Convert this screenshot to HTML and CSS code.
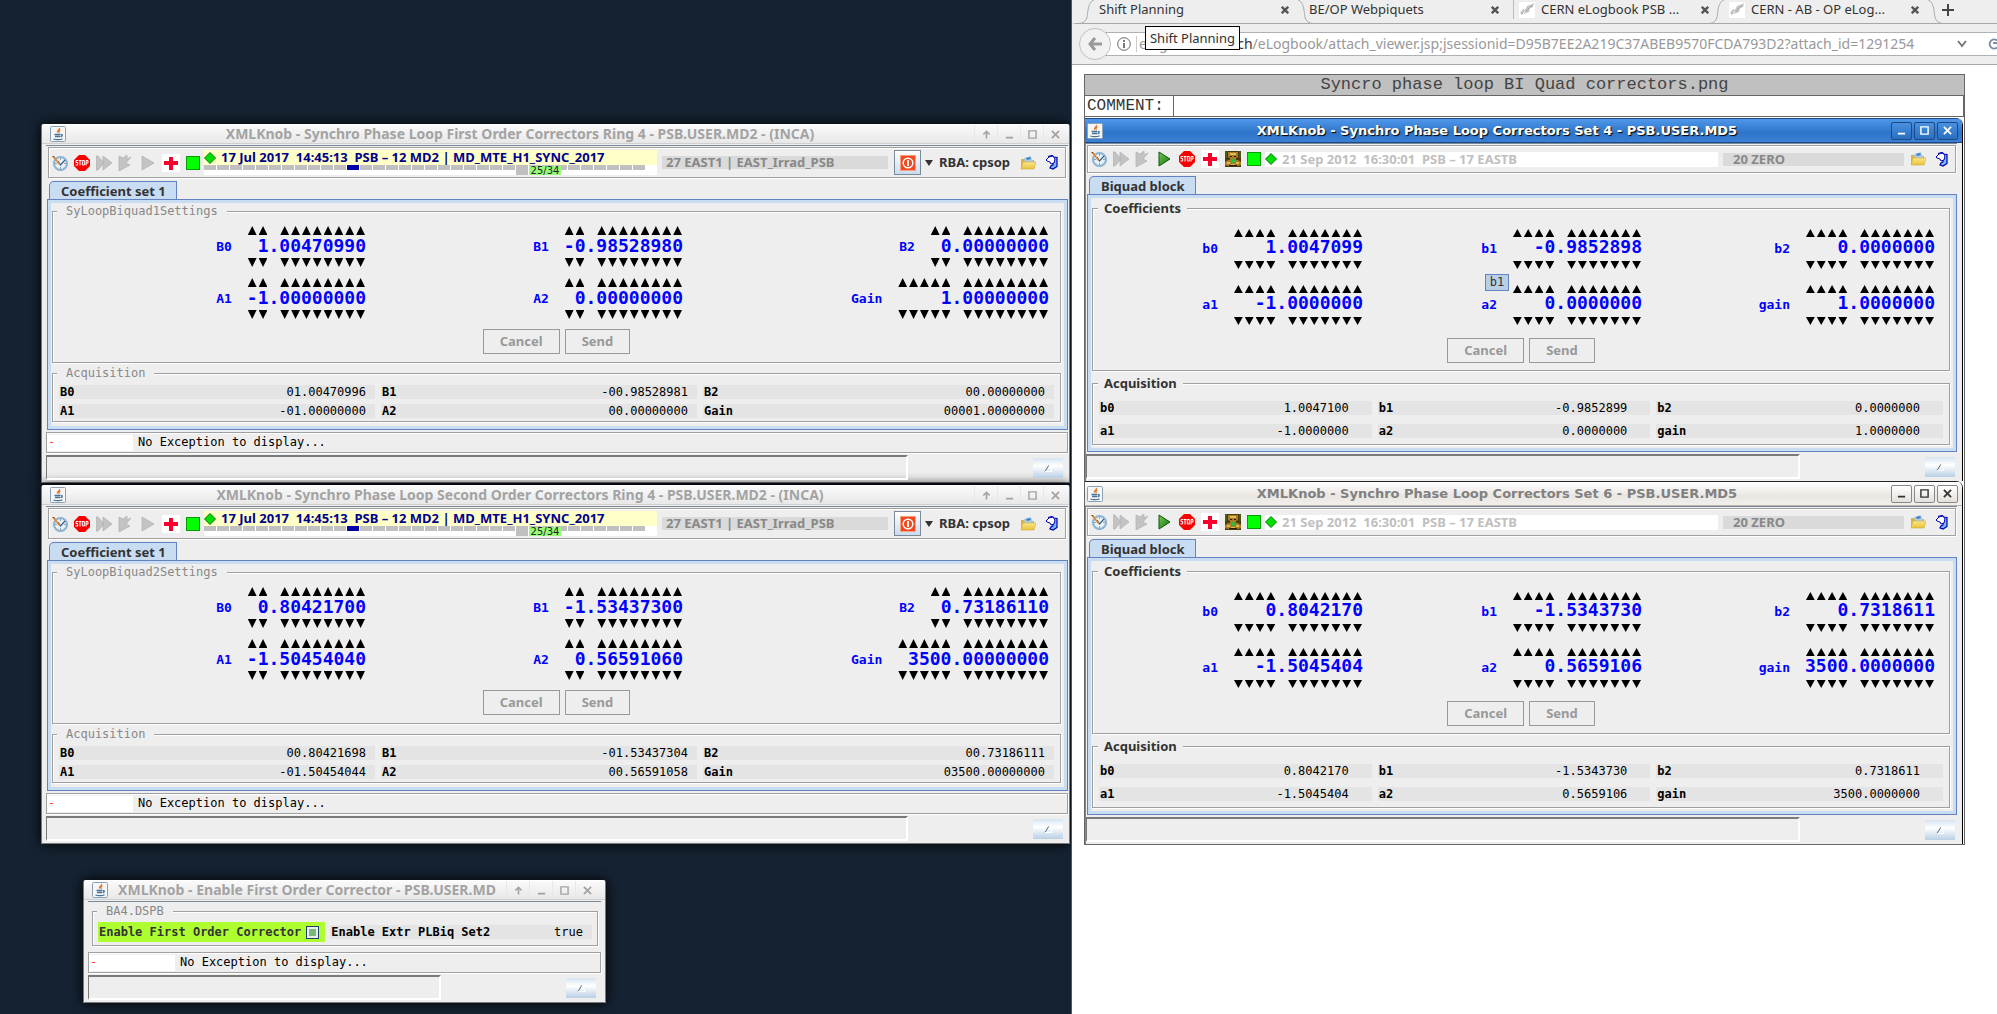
FILE: index.html
```html
<!DOCTYPE html>
<html lang="en">
<head>
<meta charset="utf-8">
<title>PSB operator console</title>
<link rel="stylesheet" href="styles.css">
</head>
<body>
<svg class="defs" aria-hidden="true">
  <defs>
    <linearGradient id="fold" x1="0" y1="0" x2="0" y2="1"><stop offset="0" stop-color="#fbe58a"/><stop offset="1" stop-color="#e8c33c"/></linearGradient>
    <linearGradient id="ply" x1="0" y1="0" x2="1" y2="1"><stop offset="0" stop-color="#7cc25a"/><stop offset="1" stop-color="#0a7a0a"/></linearGradient>
  </defs>
  <symbol id="java" viewBox="0 0 16 16"><rect x=".5" y=".5" width="15" height="15" rx="1" fill="#f4f6f8" stroke="#8aa0b4"/><path d="M9.500 2c1 1.500-3 2.500-2 4.500M10.500 4c-2 1-2 2-1 3" stroke="#e8761e" stroke-width="1.300" fill="none"/><path d="M4.500 8.500h6M5 10.500h5M11 8.500c2 0 1.500 2-.5 2.200M3.500 13c2 1 7 1 9-.3" stroke="#4a7295" stroke-width="1.300" fill="none"/></symbol>
  <symbol id="clock" viewBox="0 0 16 16"><circle cx="8.500" cy="8.500" r="6.500" fill="#e6f2fa" stroke="#8fb4d0" stroke-width="2.200"/><path d="M8.500 3.500v1M8.500 12.500v1M3.500 8.500h1M12.500 8.500h1" stroke="#555"/><path d="M6 6l2.500 4L13 5" stroke="#3f5f80" stroke-width="1.200" fill="none"/><path d="M0 1l3 1 5 7-1 1z" fill="#e8862a"/><path d="M0 1l2 0 1 2z" fill="#6b3a10"/></symbol>
  <symbol id="stop" viewBox="0 0 16 16"><path d="M5 0h6l5 5v6l-5 5H5l-5-5V5z" fill="#f80000"/><path d="M4 5.500H2v2H3.700v2.500H1.500M4.500 5.500h3M6 5.500V10.500M8.300 5.500h2v4.500h-2zM12 10.500V5.500h2v2.500h-2" stroke="#fff" fill="none"/></symbol>
  <symbol id="ff" viewBox="0 0 16 16"><path d="M0 1h2l6 7-6 7H0zM7 1l9 7-9 7z" fill="#c3c3c3" stroke="#b4b4b4" stroke-width=".8"/></symbol>
  <symbol id="skip" viewBox="0 0 16 16"><path d="M1 1l4 2 4-3 0 4 4-2-5 6 4 2L1 16z" fill="#c3c3c3" stroke="#b4b4b4" stroke-width=".8"/></symbol>
  <symbol id="playoff" viewBox="0 0 16 16"><path d="M2 1l12 7-12 7z" fill="#c3c3c3" stroke="#b4b4b4" stroke-width=".8"/></symbol>
  <symbol id="play" viewBox="0 0 16 16"><path d="M2 1l11 7-11 7z" fill="url(#ply)" stroke="#0b5a0b"/></symbol>
  <symbol id="cross" viewBox="0 0 18 18"><path fill="#fff" d="M0 0h18v18H0z"/><path d="M7 3h4v4h5v4h-5v5H7v-5H2V7h5z" fill="#f8002c"/></symbol>
  <symbol id="idol" viewBox="0 0 16 16"><path fill="#4a3a10" d="M0 0h16v16H0z"/><path d="M3 1h10v5l-2 1v2h2l3 2v3l-3 1H3l-3-1v-3l3-2h2V7L3 6z" fill="#a87c24"/><path d="M5 2h6v2H5zM2 11h3v2H2zM11 11h3v2h-3zM6 13h4v1H6z" fill="#e0bc58"/><path d="M5 5h2v1H5zM9 5h2v1H9zM4 14h8v1H4z" fill="#2a1c04"/><circle cx="8" cy="10" r="2" fill="#18c840"/><path d="M0 0h2v7H0zM14 0h2v7h-2z" fill="#4c5a14"/></symbol>
  <symbol id="ok" viewBox="0 0 14 14"><rect x=".5" y=".5" width="13" height="13" fill="#0f0" stroke="#0a9a0a"/></symbol>
  <symbol id="dia" viewBox="0 0 12 12"><path d="M6 .5L11.500 6 6 11.500.5 6z" fill="#00e000" stroke="#067806"/></symbol>
  <symbol id="folder" viewBox="0 0 16 14"><path d="M1 3h5l1 1h7v8H1z" fill="#dcb43a"/><path d="M4 2l7-2 2 6-8 1z" fill="#a9cdee"/><path d="M6 2l4-1 1 2-4 1z" fill="#3f7fc0"/><path d="M3 6h13l-2 7H1z" fill="url(#fold)" stroke="#d4ac34" stroke-width=".6"/></symbol>
  <symbol id="book" viewBox="0 0 13 15"><path d="M9 2h3v10l-3 2H6v-3l3-2z" fill="#7ab8f4"/><path d="M3 1.500l4-1 2 1.500 3 .5v9l-4 2.500-3-1 1-2 2-1V8" fill="none" stroke="#0000b0" stroke-width="1.200"/><path d="M1 5l3-3 4-1 2 3-1 4-3 1-1-2-3-1z" fill="#fff" stroke="#0000b0"/></symbol>
  <symbol id="power" viewBox="0 0 16 16"><rect width="16" height="16" rx="1" fill="#f04a1e"/><rect x=".5" y=".5" width="15" height="15" fill="none" stroke="#f8a080"/><circle cx="8" cy="8" r="4.800" fill="none" stroke="#fff" stroke-width="1.500"/><path d="M8 5v6" stroke="#fff" stroke-width="1.800"/></symbol>
  <symbol id="up" viewBox="0 0 10 10"><path d="M5 9.500V2M1.500 5L5 1.500 8.500 5" stroke="currentColor" stroke-width="1.800" fill="none"/></symbol>
  <symbol id="min" viewBox="0 0 10 10"><path d="M1 8.500h8" stroke="currentColor" stroke-width="2"/></symbol>
  <symbol id="max" viewBox="0 0 10 10"><path d="M1 1h8v8H1z" stroke="currentColor" stroke-width="1.600" fill="none"/></symbol>
  <symbol id="x" viewBox="0 0 10 10"><path d="M1 1l8 8M9 1L1 9" stroke="currentColor" stroke-width="2" fill="none"/></symbol>
  <symbol id="tx" viewBox="0 0 10 10"><path d="M1 1l8 8M9 1L1 9" stroke="currentColor" stroke-width="3" fill="none"/></symbol>
  <symbol id="tri" viewBox="0 0 9 8"><path d="M1 7.500L5 1" stroke="#666" fill="none"/><path d="M5 1l3 6.500H1" stroke="#fff" fill="none"/></symbol>
  <symbol id="fav" viewBox="0 0 16 16"><path fill="#fff" d="M0 0h16v16H0z"/><path d="M1 11l3-4 2 1 2-4 3-1 4-2-1 4-3 1-1 4-3 1-1-2-3 3z" fill="#c4c4c4"/><path d="M2 12l4-1 5-6 3-1" stroke="#a0a0a0" stroke-dasharray="2 1" fill="none"/></symbol>
</svg>

<main class="screen">
<section class="desk">

  <article class="win inca">
    <header class="title"><svg class="ji"><use href="#java"/></svg><h2>XMLKnob - Synchro Phase Loop First Order Correctors Ring 4 - PSB.USER.MD2 - (INCA)</h2>
      <button aria-label="Shade"><svg><use href="#up"/></svg></button><button aria-label="Minimise"><svg><use href="#min"/></svg></button><button aria-label="Maximise"><svg><use href="#max"/></svg></button><button aria-label="Close"><svg><use href="#x"/></svg></button></header>
    <div class="body">
      <div class="tools">
        <svg class="i16"><use href="#clock"/></svg><svg class="i16"><use href="#stop"/></svg><svg class="i16"><use href="#ff"/></svg><svg class="i16"><use href="#skip"/></svg><svg class="i16"><use href="#playoff"/></svg><svg class="i18"><use href="#cross"/></svg><svg class="i14"><use href="#ok"/></svg>
        <div class="cycle"><p class="now"><svg class="i12"><use href="#dia"/></svg>17 Jul 2017  14:45:13  PSB – 12 MD2 | MD_MTE_H1_SYNC_2017</p><div class="beats"><i class="cur"></i><i class="end"></i><span>25/34</span></div></div>
        <p class="spare">27 EAST1 | EAST_Irrad_PSB</p>
        <button class="power" aria-label="RBA login"><svg class="i16"><use href="#power"/></svg></button><span class="caret"></span><span class="rba">RBA: cpsop</span>
        <svg class="i16"><use href="#folder"/></svg><svg class="bk"><use href="#book"/></svg>
      </div>
      <button class="tab">Coefficient set 1</button>
      <div class="panel">
        <fieldset><legend>SyLoopBiquad1Settings</legend>
          <div class="knobs">
            <div class="knob"><label for="p-b0">B0</label><div class="spin" data-steps="2.8"><input id="p-b0" value="1.00470990"></div></div>
            <div class="knob"><label for="p-b1">B1</label><div class="spin" data-steps="2.8"><input id="p-b1" value="-0.98528980"></div></div>
            <div class="knob"><label for="p-b2">B2</label><div class="spin" data-steps="2.8"><input id="p-b2" value="0.00000000"></div></div>
            <div class="knob"><label for="p-a1">A1</label><div class="spin" data-steps="2.8"><input id="p-a1" value="-1.00000000"></div></div>
            <div class="knob"><label for="p-a2">A2</label><div class="spin" data-steps="2.8"><input id="p-a2" value="0.00000000"></div></div>
            <div class="knob"><label for="p-g">Gain</label><div class="spin" data-steps="5.8"><input id="p-g" value="1.00000000"></div></div>
          </div>
          <div class="acts"><button disabled>Cancel</button><button disabled>Send</button></div>
        </fieldset>
        <fieldset><legend>Acquisition</legend>
          <dl class="acq">
            <div><dt>B0</dt><dd>01.00470996</dd></div><div><dt>B1</dt><dd>-00.98528981</dd></div><div><dt>B2</dt><dd>00.00000000</dd></div>
            <div><dt>A1</dt><dd>-01.00000000</dd></div><div><dt>A2</dt><dd>00.00000000</dd></div><div><dt>Gain</dt><dd>00001.00000000</dd></div>
          </dl>
        </fieldset>
      </div>
      <div class="exc"><span class="mark">-</span><span>No Exception to display...</span></div>
      <footer class="status"><div></div><button aria-label="Show log"><svg><use href="#tri"/></svg></button></footer>
    </div>
  </article>

  <article class="win inca">
    <header class="title"><svg class="ji"><use href="#java"/></svg><h2>XMLKnob - Synchro Phase Loop Second Order Correctors Ring 4 - PSB.USER.MD2 - (INCA)</h2>
      <button aria-label="Shade"><svg><use href="#up"/></svg></button><button aria-label="Minimise"><svg><use href="#min"/></svg></button><button aria-label="Maximise"><svg><use href="#max"/></svg></button><button aria-label="Close"><svg><use href="#x"/></svg></button></header>
    <div class="body">
      <div class="tools">
        <svg class="i16"><use href="#clock"/></svg><svg class="i16"><use href="#stop"/></svg><svg class="i16"><use href="#ff"/></svg><svg class="i16"><use href="#skip"/></svg><svg class="i16"><use href="#playoff"/></svg><svg class="i18"><use href="#cross"/></svg><svg class="i14"><use href="#ok"/></svg>
        <div class="cycle"><p class="now"><svg class="i12"><use href="#dia"/></svg>17 Jul 2017  14:45:13  PSB – 12 MD2 | MD_MTE_H1_SYNC_2017</p><div class="beats"><i class="cur"></i><i class="end"></i><span>25/34</span></div></div>
        <p class="spare">27 EAST1 | EAST_Irrad_PSB</p>
        <button class="power" aria-label="RBA login"><svg class="i16"><use href="#power"/></svg></button><span class="caret"></span><span class="rba">RBA: cpsop</span>
        <svg class="i16"><use href="#folder"/></svg><svg class="bk"><use href="#book"/></svg>
      </div>
      <button class="tab">Coefficient set 1</button>
      <div class="panel">
        <fieldset><legend>SyLoopBiquad2Settings</legend>
          <div class="knobs">
            <div class="knob"><label for="q-b0">B0</label><div class="spin" data-steps="2.8"><input id="q-b0" value="0.80421700"></div></div>
            <div class="knob"><label for="q-b1">B1</label><div class="spin" data-steps="2.8"><input id="q-b1" value="-1.53437300"></div></div>
            <div class="knob"><label for="q-b2">B2</label><div class="spin" data-steps="2.8"><input id="q-b2" value="0.73186110"></div></div>
            <div class="knob"><label for="q-a1">A1</label><div class="spin" data-steps="2.8"><input id="q-a1" value="-1.50454040"></div></div>
            <div class="knob"><label for="q-a2">A2</label><div class="spin" data-steps="2.8"><input id="q-a2" value="0.56591060"></div></div>
            <div class="knob"><label for="q-g">Gain</label><div class="spin" data-steps="5.8"><input id="q-g" value="3500.00000000"></div></div>
          </div>
          <div class="acts"><button disabled>Cancel</button><button disabled>Send</button></div>
        </fieldset>
        <fieldset><legend>Acquisition</legend>
          <dl class="acq">
            <div><dt>B0</dt><dd>00.80421698</dd></div><div><dt>B1</dt><dd>-01.53437304</dd></div><div><dt>B2</dt><dd>00.73186111</dd></div>
            <div><dt>A1</dt><dd>-01.50454044</dd></div><div><dt>A2</dt><dd>00.56591058</dd></div><div><dt>Gain</dt><dd>03500.00000000</dd></div>
          </dl>
        </fieldset>
      </div>
      <div class="exc"><span class="mark">-</span><span>No Exception to display...</span></div>
      <footer class="status"><div></div><button aria-label="Show log"><svg><use href="#tri"/></svg></button></footer>
    </div>
  </article>

  <article class="win inca small">
    <header class="title"><svg class="ji"><use href="#java"/></svg><h2>XMLKnob - Enable First Order Corrector - PSB.USER.MD</h2>
      <button aria-label="Shade"><svg><use href="#up"/></svg></button><button aria-label="Minimise"><svg><use href="#min"/></svg></button><button aria-label="Maximise"><svg><use href="#max"/></svg></button><button aria-label="Close"><svg><use href="#x"/></svg></button></header>
    <div class="body">
      <fieldset><legend>BA4.DSPB</legend>
        <div class="enable">
          <label>Enable First Order Corrector<input type="checkbox" checked></label>
          <p><b>Enable Extr PLBiq Set2</b><span>true</span></p>
        </div>
      </fieldset>
      <div class="exc"><span class="mark">-</span><span>No Exception to display...</span></div>
      <footer class="status"><div></div><button aria-label="Show log"><svg><use href="#tri"/></svg></button></footer>
    </div>
  </article>
</section>

<section class="browser">
  <nav class="tabs">
    <a href="#shift" class="hover"><span>Shift Planning</span><svg class="tx"><use href="#tx"/></svg></a>
    <a href="#webpiquets"><span>BE/OP Webpiquets</span><svg class="tx"><use href="#tx"/></svg></a>
    <a href="#psb" class="sep"><svg class="i16"><use href="#fav"/></svg><span>CERN eLogbook PSB ...</span><svg class="tx"><use href="#tx"/></svg></a>
    <a href="#ab" class="on"><svg class="i16"><use href="#fav"/></svg><span>CERN - AB - OP eLog...</span><svg class="tx"><use href="#tx"/></svg></a>
    <button class="plus" aria-label="New tab"><svg viewBox="0 0 12 12"><path d="M6 0v12M0 6h12" stroke="#444" stroke-width="2"/></svg></button>
    <svg class="curve c1" viewBox="0 0 16 24"><path d="M0 23.500C10 23.500 9 16 10 10S13 1 16 0"/></svg>
    <svg class="curve c2" viewBox="0 0 16 24"><path d="M16 23.500C6 23.500 7 16 6 10S3 1 0 0"/></svg>
    <svg class="curve c3" viewBox="0 0 16 24"><path d="M0 23.500C10 23.500 9 16 10 10S13 1 16 0"/></svg>
    <svg class="curve c4" viewBox="0 0 16 24"><path d="M16 23.500C6 23.500 7 16 6 10S3 1 0 0"/></svg>
  </nav>
  <div class="nav">
    <button class="back" aria-label="Back"><svg viewBox="0 0 14 14"><path d="M7 1L2 7l5 6M2 7h12" stroke="#999" stroke-width="3" fill="none"/></svg></button>
    <div class="url"><svg class="info" viewBox="0 0 14 14"><circle cx="7" cy="7" r="6.300" fill="none" stroke="#666"/><path d="M7 6v5M7 3v2" stroke="#555" stroke-width="1.600"/></svg><p>elogbook.cern.<b>ch</b>/eLogbook/attach_viewer.jsp;jsessionid=D95B7EE2A219C37ABEB9570FCDA793D2?attach_id=1291254</p>
      <svg class="chev" viewBox="0 0 10 8"><path d="M1 1l4 5 4-5" stroke="#777" stroke-width="2" fill="none"/></svg><svg class="reload" viewBox="0 0 11 12"><path d="M11 2.500A4.500 4.500 0 1 0 11 9.500M7 5h4" stroke="#7d8fa3" stroke-width="2" fill="none"/></svg></div>
    <div class="tip">Shift Planning</div>
  </div>
  <div class="page">
    <div class="attach">
      <h1>Syncro phase loop BI Quad correctors.png</h1>
      <div class="comment"><span>COMMENT:</span><span></span></div>
      <div class="shot">

        <article class="win md5 active">
          <header class="title"><svg class="ji"><use href="#java"/></svg><h2>XMLKnob - Synchro Phase Loop Correctors Set 4 - PSB.USER.MD5</h2>
            <button aria-label="Minimise"><svg><use href="#min"/></svg></button><button aria-label="Maximise"><svg><use href="#max"/></svg></button><button aria-label="Close"><svg><use href="#x"/></svg></button></header>
          <div class="body">
            <div class="tools">
              <svg class="i16"><use href="#clock"/></svg><svg class="i16"><use href="#ff"/></svg><svg class="i16"><use href="#skip"/></svg><svg class="i16"><use href="#play"/></svg><svg class="i16"><use href="#stop"/></svg><svg class="i18"><use href="#cross"/></svg><svg class="i16"><use href="#idol"/></svg><svg class="i14"><use href="#ok"/></svg>
              <p class="old"><svg class="i12"><use href="#dia"/></svg>21 Sep 2012  16:30:01  PSB – 17 EASTB</p>
              <p class="spare">20 ZERO</p>
              <svg class="i16"><use href="#folder"/></svg><svg class="bk"><use href="#book"/></svg>
            </div>
            <button class="tab">Biquad block</button>
            <div class="panel">
              <fieldset><legend>Coefficients</legend>
                <div class="knobs">
                  <div class="knob"><label for="r-b0">b0</label><div class="spin" data-steps="4.7"><input id="r-b0" value="1.0047099"></div></div>
                  <div class="knob"><label for="r-b1">b1</label><div class="spin" data-steps="4.7"><input id="r-b1" value="-0.9852898"></div><span class="hint">b1</span></div>
                  <div class="knob"><label for="r-b2">b2</label><div class="spin" data-steps="4.7"><input id="r-b2" value="0.0000000"></div></div>
                  <div class="knob"><label for="r-a1">a1</label><div class="spin" data-steps="4.7"><input id="r-a1" value="-1.0000000"></div></div>
                  <div class="knob"><label for="r-a2">a2</label><div class="spin" data-steps="4.7"><input id="r-a2" value="0.0000000"></div></div>
                  <div class="knob"><label for="r-g">gain</label><div class="spin" data-steps="4.7"><input id="r-g" value="1.0000000"></div></div>
                </div>
                <div class="acts"><button disabled>Cancel</button><button disabled>Send</button></div>
              </fieldset>
              <fieldset><legend>Acquisition</legend>
                <dl class="acq">
                  <div><dt>b0</dt><dd>1.0047100</dd></div><div><dt>b1</dt><dd>-0.9852899</dd></div><div><dt>b2</dt><dd>0.0000000</dd></div>
                  <div><dt>a1</dt><dd>-1.0000000</dd></div><div><dt>a2</dt><dd>0.0000000</dd></div><div><dt>gain</dt><dd>1.0000000</dd></div>
                </dl>
              </fieldset>
            </div>
            <footer class="status"><div></div><button aria-label="Show log"><svg><use href="#tri"/></svg></button></footer>
          </div>
        </article>

        <article class="win md5">
          <header class="title"><svg class="ji"><use href="#java"/></svg><h2>XMLKnob - Synchro Phase Loop Correctors Set 6 - PSB.USER.MD5</h2>
            <button aria-label="Minimise"><svg><use href="#min"/></svg></button><button aria-label="Maximise"><svg><use href="#max"/></svg></button><button aria-label="Close"><svg><use href="#x"/></svg></button></header>
          <div class="body">
            <div class="tools">
              <svg class="i16"><use href="#clock"/></svg><svg class="i16"><use href="#ff"/></svg><svg class="i16"><use href="#skip"/></svg><svg class="i16"><use href="#play"/></svg><svg class="i16"><use href="#stop"/></svg><svg class="i18"><use href="#cross"/></svg><svg class="i16"><use href="#idol"/></svg><svg class="i14"><use href="#ok"/></svg>
              <p class="old"><svg class="i12"><use href="#dia"/></svg>21 Sep 2012  16:30:01  PSB – 17 EASTB</p>
              <p class="spare">20 ZERO</p>
              <svg class="i16"><use href="#folder"/></svg><svg class="bk"><use href="#book"/></svg>
            </div>
            <button class="tab">Biquad block</button>
            <div class="panel">
              <fieldset><legend>Coefficients</legend>
                <div class="knobs">
                  <div class="knob"><label for="s-b0">b0</label><div class="spin" data-steps="4.7"><input id="s-b0" value="0.8042170"></div></div>
                  <div class="knob"><label for="s-b1">b1</label><div class="spin" data-steps="4.7"><input id="s-b1" value="-1.5343730"></div></div>
                  <div class="knob"><label for="s-b2">b2</label><div class="spin" data-steps="4.7"><input id="s-b2" value="0.7318611"></div></div>
                  <div class="knob"><label for="s-a1">a1</label><div class="spin" data-steps="4.7"><input id="s-a1" value="-1.5045404"></div></div>
                  <div class="knob"><label for="s-a2">a2</label><div class="spin" data-steps="4.7"><input id="s-a2" value="0.5659106"></div></div>
                  <div class="knob"><label for="s-g">gain</label><div class="spin" data-steps="4.7"><input id="s-g" value="3500.0000000"></div></div>
                </div>
                <div class="acts"><button disabled>Cancel</button><button disabled>Send</button></div>
              </fieldset>
              <fieldset><legend>Acquisition</legend>
                <dl class="acq">
                  <div><dt>b0</dt><dd>0.8042170</dd></div><div><dt>b1</dt><dd>-1.5343730</dd></div><div><dt>b2</dt><dd>0.7318611</dd></div>
                  <div><dt>a1</dt><dd>-1.5045404</dd></div><div><dt>a2</dt><dd>0.5659106</dd></div><div><dt>gain</dt><dd>3500.0000000</dd></div>
                </dl>
              </fieldset>
            </div>
            <footer class="status"><div></div><button aria-label="Show log"><svg><use href="#tri"/></svg></button></footer>
          </div>
        </article>

      </div>
    </div>
  </div>
</section>
</main>
<script src="knobs.js"></script>
</body>
</html>
```

FILE: styles.css
```css
* { box-sizing: border-box; }
body { margin: 0; font: 13px/15px "Noto Sans", sans-serif; color: #333; }
p, h1, h2, dl, dd, fieldset { margin: 0; }
button { font: inherit; color: inherit; padding: 0; border: 0; background: none; }
.defs { position: absolute; width: 0; height: 0; }
svg { display: block; flex: none; }
.i12 { width: 12px; height: 12px; }
.i14 { width: 14px; height: 14px; }
.i16 { width: 16px; height: 16px; }
.i18 { width: 18px; height: 18px; }
.bk { width: 13px; height: 15px; }

.screen { display: grid; grid-template-columns: 1071fr 926fr; min-height: 100vh; }
.desk { background: #152231; padding: 124px 1px 12px 41px; min-width: 0; }

/* Windows */
.win { background: #eee; }
.inca { box-shadow: 0 0 12px #000; border: 1px solid #77797c; border-top-color: #fff; border-radius: 3px 3px 0 0; margin-bottom: 2px; }
.title { display: flex; align-items: center; }
.title h2 { flex: 1; text-align: center; white-space: nowrap; }
.title button { display: flex; align-items: center; justify-content: center; }
.title button svg { width: 9px; height: 9px; }
.ji { width: 16px; height: 16px; }
.inca .title { height: 19px; padding: 0 3px 0 8px; background: linear-gradient(#fafafa, #e8e8e8); border-bottom: 1px solid #cfcfcf; color: #a3a3a3; }
.inca h2 { font: bold 14px/18px "Noto Sans", sans-serif; }
.inca .title button { width: 23px; height: 18px; border-left: 1px solid #e8e8e8; }
.inca .body { margin: 1px 1px 2px 4px; border-top: 1px solid #7a8a99; }

.tools { display: flex; align-items: center; gap: 6px; height: 31px; padding-left: 3px; margin: 1px 2px 3px 2px; border: 1px solid #a0a0a0; box-shadow: 1px 1px #fff, inset 1px 1px #fff; font-weight: bold; }
.cycle { flex: 455; margin-left: -2px; height: 25px; background: #fff; min-width: 0; }
.now { display: flex; align-items: center; gap: 5px; height: 15px; background: #ffffc8; color: #00008b; white-space: pre; }
.beats { display: grid; grid-template-columns: repeat(34, 12px); column-gap: 1px; height: 10px; background: repeating-linear-gradient(90deg, #c0c0c0 0 12px, #fff 12px 13px) 0 0 / 441px 5px no-repeat; }
.cur { grid-column: 12; grid-row: 1; height: 5px; background: #0000a8; }
.end { grid-column: 25; grid-row: 1; background: #c0c0c0; }
.beats span { grid-column: 26 / 29; grid-row: 1; width: 32px; height: 9px; margin-top: 1px; background: #98fb78; color: #222; font: 10px/9px "DejaVu Sans", sans-serif; text-align: center; }
.spare { flex: 223; height: 13px; margin-left: -1px; padding-left: 4px; background: #dadada; color: #888; line-height: 13px; white-space: nowrap; }
.power { width: 27px; height: 25px; display: grid; place-items: center; border: 1px solid #7a8a99; background: linear-gradient(#fff, #c8dcf0); }
.caret { border: 4px solid transparent; border-top: 6px solid #333; border-bottom: 0; margin-left: -2px; }
.rba { white-space: nowrap; margin-right: 4px; }
.tools .bk { margin: 0 7px 0 3px; }

.tab { display: block; margin-left: 3px; height: 18px; padding: 0 10px 0 11px; border: 1px solid #6382bf; border-bottom: 0; border-top-left-radius: 5px; background: #c8ddf2; font-weight: bold; line-height: 16px; }
.panel { border: 1px solid #6382bf; box-shadow: inset 0 0 0 3px #c8ddf2; }
fieldset { min-width: 0; padding: 0; border: 1px solid #a0a0a0; box-shadow: 1px 1px #fff, inset 1px 1px #fff; }
legend { background: #eee; white-space: nowrap; }
.inca .panel { margin-left: 1px; padding: 4px 6px 7px 4px; }
.inca legend { font: 12px/14px "DejaVu Sans Mono", monospace; color: #888; margin-left: 4px; padding: 0 9px; }

/* Digit-by-digit number fields */
.knobs { display: grid; }
.inca .knobs { grid-template-columns: 313fr 317fr 366fr; row-gap: 11px; padding: 8px 11px 0 0; }
.knob { display: flex; justify-content: flex-end; align-items: center; gap: 15px; position: relative; color: #00f; }
.knob label { font: bold 13px/14px "DejaVu Sans Mono", monospace; }
.spin { font: bold 18px/20px "DejaVu Sans Mono", monospace; }
.spin input { display: block; width: 100%; height: 23px; padding: 0 0 3px; border: 0; background: none; font: inherit; color: #00f; text-align: right; }
.steps { display: grid; }
.steps button { height: 9px; background: #000; margin: 0 1px; }
.steps.inc button { clip-path: polygon(50% 0, 100% 100%, 0 100%); }
.steps.dec button { clip-path: polygon(0 0, 100% 0, 50% 100%); }
.acts { display: flex; justify-content: center; gap: 5px; }
.acts button { height: 25px; padding: 0 16px; border: 1px solid #999; color: #999; font-weight: bold; }
.inca .acts { padding: 10px 0 8px; }
.inca fieldset + fieldset { margin-top: 3px; }

.acq { display: grid; column-gap: 6px; font: 12px/14px "DejaVu Sans Mono", monospace; color: #000; }
.acq div { display: flex; justify-content: space-between; background: #e4e4e4; padding-left: 1px; }
.acq dt { font-weight: bold; }
.inca .acq { grid-template-columns: 316fr 316fr 351fr; row-gap: 5px; padding: 5px 6px 3px; }
.inca .acq dd { padding-right: 9px; }

.exc { display: flex; align-items: center; gap: 5px; height: 21px; margin: 2px 0; padding: 2px 1px; border: 1px solid #a0a0a0; box-shadow: inset 1px 1px #fff, 1px 1px #fff; font: 12px/15px "DejaVu Sans Mono", monospace; color: #000; }
.mark { width: 85px; height: 16px; background: #fff; color: #f33; }
.status { display: flex; align-items: center; gap: 125px; padding-right: 5px; }
.status div { flex: 1; height: 25px; border: 1px solid #fff; border-width: 2px 2px 2px 1px; border-top-color: #7a7a7a; border-left-color: #7a7a7a; }
.status button { width: 30px; height: 20px; display: grid; place-items: center; background: linear-gradient(#d5e4f2, #fff 40%, #b8cfe5); }
.status button svg { width: 9px; height: 8px; }

/* Corrector switch */
.small { width: 523px; max-width: 90%; margin: 36px 0 0 42px; }
.inca.small .title { padding-right: 7px; }
.small .body { margin-right: 4px; }
.small fieldset { margin: 2px 3px 6px 4px; }
.enable { display: flex; align-items: center; gap: 5px; padding: 4px 5px 3px; font: bold 12px/20px "DejaVu Sans Mono", monospace; }
.enable label { display: flex; align-items: center; gap: 5px; background: #adff2f; padding: 0 6px 0 1px; }
.enable input { appearance: none; width: 13px; height: 13px; margin: 0; border: 1px solid #1f3f70; background: #78b878; box-shadow: inset 0 0 0 2px #e8f0e8; }
.enable p { flex: 1; display: flex; justify-content: space-between; background: #e4e4e4; line-height: 14px; padding: 0 9px 0 1px; color: #000; }
.enable span { font-weight: normal; }

/* Browser */
.browser { background: #fff; border-left: 1px solid #555; min-width: 0; overflow: hidden; }
.tabs { display: flex; position: relative; height: 24px; padding-left: 17px; background: #eee; border-bottom: 1px solid #a8a8a8; border-left: 4px solid #eee; }
.tabs a { display: flex; align-items: center; flex: 0 0 210px; height: 19px; gap: 6px; padding: 0 14px 0 6px; color: #333; text-decoration: none; }
.tabs a span { flex: 1; white-space: nowrap; }
.tabs .sep { border-left: 1px solid #bbb; padding-left: 5px; }
.tabs .on { padding-left: 6px; }
.tx { width: 8px; height: 8px; color: #555; }
.plus { width: 12px; height: 12px; margin: 4px 0 0 9px; }
.plus svg { width: 12px; height: 12px; }
.curve { position: absolute; top: 0; width: 16px; height: 24px; }
.curve path { fill: none; stroke: #a8adb4; }
.c1 { left: 2px; }
.c2 { left: 222px; }
.c3 { left: 632px; }
.c4 { left: 852px; }
.nav { position: relative; display: flex; align-items: center; height: 41px; background: #eee; border-bottom: 1px solid #a8a8a8; padding-left: 7px; }
.back { width: 32px; height: 32px; border: 1px solid #c0c0c0; border-radius: 50%; background: #f2f2f2; display: grid; place-items: center; z-index: 1; }
.back svg { width: 14px; height: 14px; }
.url { flex: 1; min-width: 0; height: 24px; margin-left: -6px; padding-left: 12px; display: flex; align-items: center; background: #fff; border: 1px solid #b0b0b0; border-width: 1px 0; overflow: hidden; }
.info { width: 14px; height: 14px; }
.url p { flex: 1; min-width: 0; margin-left: 5px; padding-left: 2px; border-left: 1px solid #ccc; font-size: 14px; line-height: 16px; color: #999; white-space: nowrap; }
.url b { font-weight: normal; color: #333; }
.chev { width: 10px; height: 8px; }
.reload { width: 11px; height: 12px; margin-left: 19px; }
.tip { position: absolute; left: 73px; top: 2px; z-index: 2; width: 95px; height: 24px; border: 1px solid #000; background: #fafafa; text-align: center; line-height: 22px; }
.page { padding: 9px 32px 9px 12px; }
.attach { border: 1px solid #666; font-family: "Liberation Mono", monospace; }
.attach h1 { height: 21px; background: #c0c0c0; border-bottom: 1px solid #666; text-align: center; font: 17px/20px "Liberation Mono", monospace; color: #444; }
.comment { display: grid; grid-template-columns: 89px 1fr; height: 21px; border-bottom: 1px solid #666; font-size: 16px; line-height: 20px; color: #333; }
.comment span { padding-left: 2px; border-right: 1px solid #666; }

/* Windows inside the attached picture */
.shot { padding: 1px 1px 0 0; font-family: "Noto Sans", sans-serif; }
.md5 { border-right: 1px solid #000; border-radius: 0 7px 0 0; overflow: hidden; }
.md5 .title { height: 25px; gap: 2px; padding: 0 4px 0 2px; background: linear-gradient(#fff, #eae6e2 60%, #f2efec); border-top: 1px solid #222; border-bottom: 1px solid #b8b4b0; color: #808080; }
.md5 h2 { font: bold 13px/18px "DejaVu Sans", sans-serif; }
.md5 .title button { width: 21px; height: 18px; border: 1px solid #888; border-radius: 2px; color: #333; background: linear-gradient(#fff, #e4e0dc); }
.active .title { background: linear-gradient(#4f98ea, #2e74c8 60%, #3b80d4); border-color: #1d4a86; color: #fff; }
.active h2 { text-shadow: 1px 1px 1px #000; }
.active .title button { background: linear-gradient(#4a90e0, #2a6ec0); border-color: #1d4a86; color: #fff; }
.md5 .body { margin: 0 5px 0 0; border-top: 1px solid #7a8a99; border-left: 1px solid #7a8a99; }
.md5 .tools { height: 28px; margin: 1px 1px 3px 1px; }
.old { flex: 456; display: flex; align-items: center; gap: 5px; height: 15px; margin-left: -2px; background: #fff; color: #c0c0c0; white-space: pre; }
.md5 .spare { flex: 172; padding-left: 10px; }
.md5 .panel { margin: 0 0 0 1px; padding: 6px 6px 6px 4px; }
.md5 legend { font-weight: bold; line-height: 14px; margin-left: 5px; padding: 0 6px; }
.md5 .knobs { grid-template-columns: 270fr 279fr 293fr; row-gap: 16px; padding: 14px 14px 0 0; }
.md5 .steps button { height: 8px; }
.md5 .spin input { height: 24px; padding-bottom: 5px; }
.md5 .acts { padding: 13px 0 7px; }
.md5 fieldset + fieldset { margin-top: 5px; }
.md5 .acq { grid-template-columns: 273fr 273fr 287fr; row-gap: 9px; padding: 11px 6px 6px; }
.md5 .acq dd { padding-right: 23px; }
.md5 .status { margin-top: 2px; padding: 0 2px 2px 0; }
.hint { position: absolute; right: 133px; bottom: -22px; width: 24px; height: 17px; border: 1px solid #6382bf; background: #b8cfe5; color: #333; font: 12px/15px "DejaVu Sans Mono", monospace; text-align: center; }
```

FILE: knobs.js
```js
// Adds one increment and one decrement button per digit to every number field.
document.querySelectorAll('.spin').forEach(function (spin) {
  var parts = spin.dataset.steps.split('.').map(Number);
  var input = spin.querySelector('input');
  var total = parts[0] + 1 + parts[1];
  spin.style.width = total + 'ch';

  function row(kind, sign) {
    var el = document.createElement('div');
    el.className = 'steps ' + kind;
    el.style.gridTemplateColumns = 'repeat(' + total + ', 1fr)';
    for (var i = 0; i < total; i++) {
      if (i === parts[0]) continue;
      var power = i < parts[0] ? parts[0] - 1 - i : parts[0] - i;
      var b = document.createElement('button');
      b.type = 'button';
      b.style.gridColumn = i + 1;
      b.setAttribute('aria-label', (sign > 0 ? 'Add' : 'Subtract') + ' 10^' + power);
      b.addEventListener('click', step.bind(null, sign * Math.pow(10, power)));
      el.appendChild(b);
    }
    return el;
  }
  function step(by) {
    input.value = (Number(input.value) + by).toFixed(parts[1]);
  }
  spin.prepend(row('inc', 1));
  spin.append(row('dec', -1));
});
```
